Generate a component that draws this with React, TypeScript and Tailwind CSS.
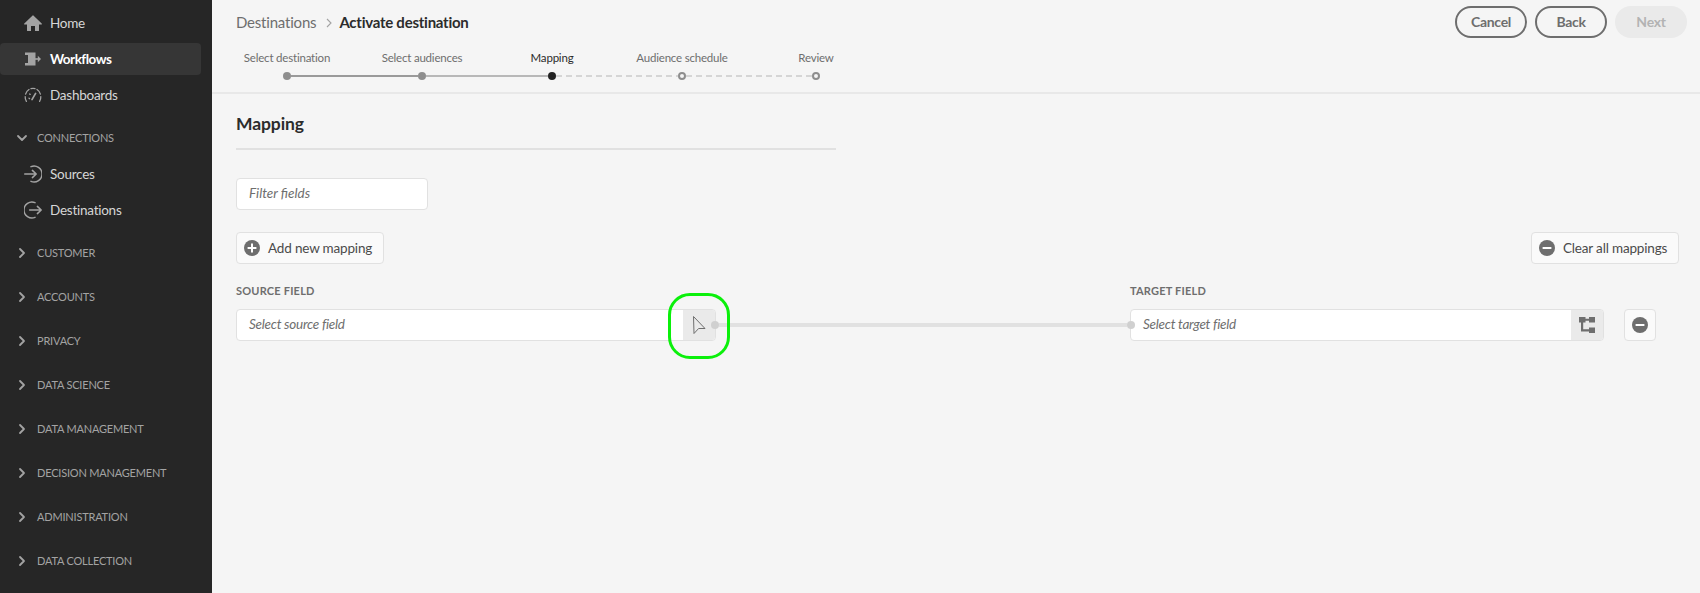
import React from "react";

const font = "font-['Lato','Liberation_Sans',sans-serif]";

function Home() {
  return (
    <svg width="18" height="18" viewBox="0 0 18 18" fill="#a3a3a3">
      <path d="M17.7 9.6 9.4 1.4a.55.55 0 0 0-.8 0L.3 9.6a.5.5 0 0 0 .4.9H3v6a.5.5 0 0 0 .5.5H7v-5h4v5h3.5a.5.5 0 0 0 .5-.5v-6h2.3a.5.5 0 0 0 .4-.9Z" />
    </svg>
  );
}
function Workflows() {
  return (
    <svg width="18" height="18" viewBox="0 0 18 18" fill="#a3a3a3">
      <path d="M1 2.5h10.5v13H1v-2.6h3V5.1H1Z" />
      <rect x="11" y="8.2" width="4" height="1.6" />
      <path d="M13.8 5.8 17 9l-3.2 3.2Z" />
    </svg>
  );
}
function Dashboards() {
  return (
    <svg width="18" height="18" viewBox="0 0 18 18" fill="none" stroke="#a3a3a3" strokeWidth="1.3" strokeLinecap="round">
      <path d="M2.4 15.4A8 8 0 0 1 1.2 10.6" />
      <path d="M1.6 8.2A8 8 0 0 1 5 3.5" />
      <path d="M7 2.6A8 8 0 0 1 11 2.6" />
      <path d="M13 3.5A8 8 0 0 1 16.4 8.2" />
      <path d="M16.8 10.6A8 8 0 0 1 15.6 15.4" />
      <path d="M8 13.6 11.6 7.4" strokeWidth="1.7" />
      <path d="M5 12.2l.6.4M5.6 8l.6.4" />
    </svg>
  );
}
function Sources() {
  return (
    <svg width="18" height="18" viewBox="0 0 18 18" fill="none" stroke="#a3a3a3" strokeWidth="1.5">
      <path d="M7 1.6A8 8 0 1 1 7 16.4" strokeLinecap="round" />
      <path d="M0.7 9H12M8.4 5.4 12.2 9l-3.8 3.6" strokeLinecap="round" strokeLinejoin="round" />
    </svg>
  );
}
function Destinations() {
  return (
    <svg width="18" height="18" viewBox="0 0 18 18" fill="none" stroke="#a3a3a3" strokeWidth="1.5">
      <path d="M11 1.6A8 8 0 1 0 11 16.4" strokeLinecap="round" />
      <path d="M5.6 9H17M13.4 5.4 17.2 9l-3.8 3.6" strokeLinecap="round" strokeLinejoin="round" />
    </svg>
  );
}
function Chevron({ open }: { open?: boolean }) {
  return (
    <svg width="12" height="12" viewBox="0 0 12 12" fill="none" stroke="#a3a3a3" strokeWidth="1.8" strokeLinecap="round" strokeLinejoin="round">
      {open ? <path d="M2 4 6 8l4-4" /> : <path d="M4 2l4 4-4 4" />}
    </svg>
  );
}
function CirclePlus() {
  return (
    <svg width="16" height="16" viewBox="0 0 16 16">
      <circle cx="8" cy="8" r="8" fill="#6e6e6e" />
      <path d="M8 3.6v8.8M3.6 8h8.8" stroke="#fff" strokeWidth="2" />
    </svg>
  );
}
function CircleMinus() {
  return (
    <svg width="16" height="16" viewBox="0 0 16 16">
      <circle cx="8" cy="8" r="8" fill="#6e6e6e" />
      <path d="M3.6 8h8.8" stroke="#fff" strokeWidth="2" />
    </svg>
  );
}
function Tree() {
  return (
    <svg width="18" height="18" viewBox="0 0 18 18" fill="#6e6e6e">
      <rect x="1" y="1" width="6.5" height="5.5" />
      <rect x="11" y="1" width="6" height="5.5" />
      <rect x="11" y="11.5" width="6" height="5.5" />
      <path d="M3 6h2.2v7.2H11v2.2H3ZM7 2.7h4v2H7Z" />
    </svg>
  );
}
function Pointer() {
  return (
    <svg width="18" height="20" viewBox="0 0 18 20" fill="none" stroke="#6e6e6e" strokeWidth="1" strokeLinejoin="round">
      <path d="M3.5 1.5 15 13.5H8.6L4 18.5Z" />
    </svg>
  );
}

function NavRow({ icon, label, active }: { icon: React.ReactNode; label: string; active?: boolean }) {
  return (
    <div className="h-9 py-0.5">
      <div className={active ? "flex h-8 w-[201px] items-center gap-[8px] rounded pl-6 bg-[#363636] text-white font-bold text-[13.5px] tracking-[-0.5px]" : "flex h-8 w-[201px] items-center gap-[8px] pl-6 text-[#d6d6d6] text-[13.5px] tracking-[-0.25px]"}>
        {icon}
        <span>{label}</span>
      </div>
    </div>
  );
}

function Section({ label }: { label: string }) {
  return (
    <div className="flex h-11 items-center gap-[9px] pl-[16px] text-[11px] tracking-[-0.2px] text-[#a3a3a3]">
      <Chevron />
      <span>{label}</span>
    </div>
  );
}

const steps = [
  { label: "Select destination", w: "w-[134px]", cls: "text-[#6e6e6e]" },
  { label: "Select audiences", w: "ml-[3px] w-[130px]", cls: "text-[#6e6e6e]" },
  { label: "Mapping", w: "w-[130px]", cls: "text-[#2c2c2c]" },
  { label: "Audience schedule", w: "w-[130px]", cls: "text-[#6e6e6e]" },
  { label: "Review", w: "w-[138px]", cls: "text-[#6e6e6e]" },
];

const dashed = "h-[2px] bg-[repeating-linear-gradient(90deg,#d5d5d5_0_6px,transparent_6px_10px)]";

function Stepper() {
  return (
    <div className="pt-[4px] pl-2">
      <div className="flex">
        {steps.map((s) => (
          <div key={s.label} className={`${s.w} text-center text-[11.5px] leading-4 tracking-[-0.2px] whitespace-nowrap ${s.cls}`}>
            {s.label}
          </div>
        ))}
      </div>
      <div className="mt-[6px] flex items-center pl-[63px]">
        <span className="h-2 w-2 rounded-full bg-[#8e8e8e]" />
        <span className="h-[2px] w-[127px] bg-[#9a9a9a]" />
        <span className="h-2 w-2 rounded-full bg-[#8e8e8e]" />
        <span className="h-[2px] w-[122px] bg-[#b8b8b8]" />
        <span className="h-2 w-2 rounded-full bg-[#222222]" />
        <span className={`w-[122px] ${dashed}`} />
        <span className="h-2 w-2 rounded-full border-2 border-[#8e8e8e] bg-[#f5f5f5]" />
        <span className={`w-[126px] ${dashed}`} />
        <span className="h-2 w-2 rounded-full border-2 border-[#8e8e8e] bg-[#f5f5f5]" />
      </div>
    </div>
  );
}

function ActionButton({ icon, label, w }: { icon: React.ReactNode; label: string; w: string }) {
  return (
    <div className={`flex h-8 ${w} items-center gap-[8px] rounded border border-[#e1e1e1] bg-[#fafafa] pl-[7px] text-[13.5px] tracking-[-0.17px] text-[#4b4b4b]`}>
      {icon}
      <span>{label}</span>
    </div>
  );
}

function PillButton({ label, disabled }: { label: string; disabled?: boolean }) {
  return disabled ? (
    <div className="flex h-8 w-[72px] items-center justify-center rounded-full bg-[#eaeaea] pb-px text-[14px] font-bold tracking-[-0.3px] text-[#b3b3b3]">{label}</div>
  ) : (
    <div className="flex h-8 w-[72px] items-center justify-center rounded-full border-2 border-[#6e6e6e] pb-px text-[14px] font-bold tracking-[-0.3px] text-[#6e6e6e]">{label}</div>
  );
}

export default function App() {
  return (
    <div className={`flex h-[593px] w-full overflow-hidden bg-[#f5f5f5] ${font}`}>
      <aside className="h-full w-[212px] shrink-0 bg-[#262626] pt-[5px]">
        <NavRow icon={<Home />} label="Home" />
        <NavRow icon={<Workflows />} label="Workflows" active />
        <NavRow icon={<Dashboards />} label="Dashboards" />
        <div className="mt-[7px] flex h-9 items-center gap-[9px] pl-[16px] text-[11px] tracking-[-0.2px] text-[#a3a3a3]">
          <Chevron open />
          <span>CONNECTIONS</span>
        </div>
        <NavRow icon={<Sources />} label="Sources" />
        <NavRow icon={<Destinations />} label="Destinations" />
        <div className="h-[3px]" />
        {["CUSTOMER", "ACCOUNTS", "PRIVACY", "DATA SCIENCE", "DATA MANAGEMENT", "DECISION MANAGEMENT", "ADMINISTRATION", "DATA COLLECTION"].map((s) => (
          <Section key={s} label={s} />
        ))}
      </aside>
      <main className="min-w-0 flex-1">
        <header className="flex h-[94px] justify-between border-b-2 border-[#e8e8e8] pr-[13px]">
          <div>
            <div className="flex h-[46px] items-center pl-6 pb-px text-[15px] tracking-[-0.2px]">
              <span className="text-[#6e6e6e]">Destinations</span>
              <svg className="mr-[5px] ml-[8px]" width="10" height="10" viewBox="0 0 10 10" fill="none" stroke="#a3a3a3" strokeWidth="1.1"><path d="M3 1l4 4-4 4" /></svg>
              <span className="font-bold tracking-[-0.25px] text-[#2c2c2c]">Activate destination</span>
            </div>
            <Stepper />
          </div>
          <div className="flex gap-2 pt-[6px]">
            <PillButton label="Cancel" />
            <PillButton label="Back" />
            <PillButton label="Next" disabled />
          </div>
        </header>
        <section className="pl-6 pr-[21px]">
          <div className="w-[600px] border-b-2 border-[#e1e1e1] pt-[19px] pb-[13px]">
            <h1 className="text-[17.5px] leading-[22px] font-bold tracking-[-0.1px] text-[#2c2c2c]">Mapping</h1>
          </div>
          <div className="mt-[28px] flex h-8 w-[192px] items-center rounded border border-[#e1e1e1] bg-white pb-[2px] pl-3 text-[13.5px] text-[#6e6e6e] italic">
            Filter fields
          </div>
          <div className="mt-[22px] flex items-center justify-between">
            <ActionButton icon={<CirclePlus />} label="Add new mapping" w="w-[148px]" />
            <ActionButton icon={<CircleMinus />} label="Clear all mappings" w="w-[148px]" />
          </div>
          <div className="mt-[19px] flex h-[16px] items-center text-[11px] font-bold tracking-[0.2px] text-[#6e6e6e]">
            <span className="w-[894px]">SOURCE FIELD</span>
            <span>TARGET FIELD</span>
          </div>
          <div className="relative mt-[10px] flex items-center">
            <div className="flex h-8 w-[480px] items-center overflow-hidden rounded border border-[#e1e1e1] bg-white text-[13.5px] tracking-[-0.25px] text-[#6e6e6e] italic">
              <span className="flex-1 pb-[2px] pl-3">Select source field</span>
              <span className="flex h-full w-[32px] items-center justify-center bg-[#eaeaea]"><Pointer /></span>
            </div>
            <div className="flex w-[414px] items-center">
              <span className="relative -ml-[5px] h-2 w-2 shrink-0 rounded-full bg-[#d0d0d0]" />
              <span className="h-[4px] flex-1 bg-[#e1e1e1]" />
              <span className="relative z-10 -mr-[5px] h-2 w-2 shrink-0 rounded-full bg-[#d0d0d0]" />
            </div>
            <div className="flex h-8 w-[474px] items-center overflow-hidden rounded border border-[#e1e1e1] bg-white text-[13.5px] tracking-[-0.25px] text-[#6e6e6e] italic">
              <span className="flex-1 pb-[2px] pl-3">Select target field</span>
              <span className="flex h-full w-[32px] items-center justify-center bg-[#eaeaea]"><Tree /></span>
            </div>
            <div className="ml-5 flex h-8 w-8 items-center justify-center rounded border border-[#e1e1e1] bg-[#fafafa]">
              <CircleMinus />
            </div>
            <div className="absolute left-[432px] top-[-16px] h-[66px] w-[62px] rounded-[22px] border-[3px] border-[#0bf00b]" />
          </div>
        </section>
      </main>
    </div>
  );
}
